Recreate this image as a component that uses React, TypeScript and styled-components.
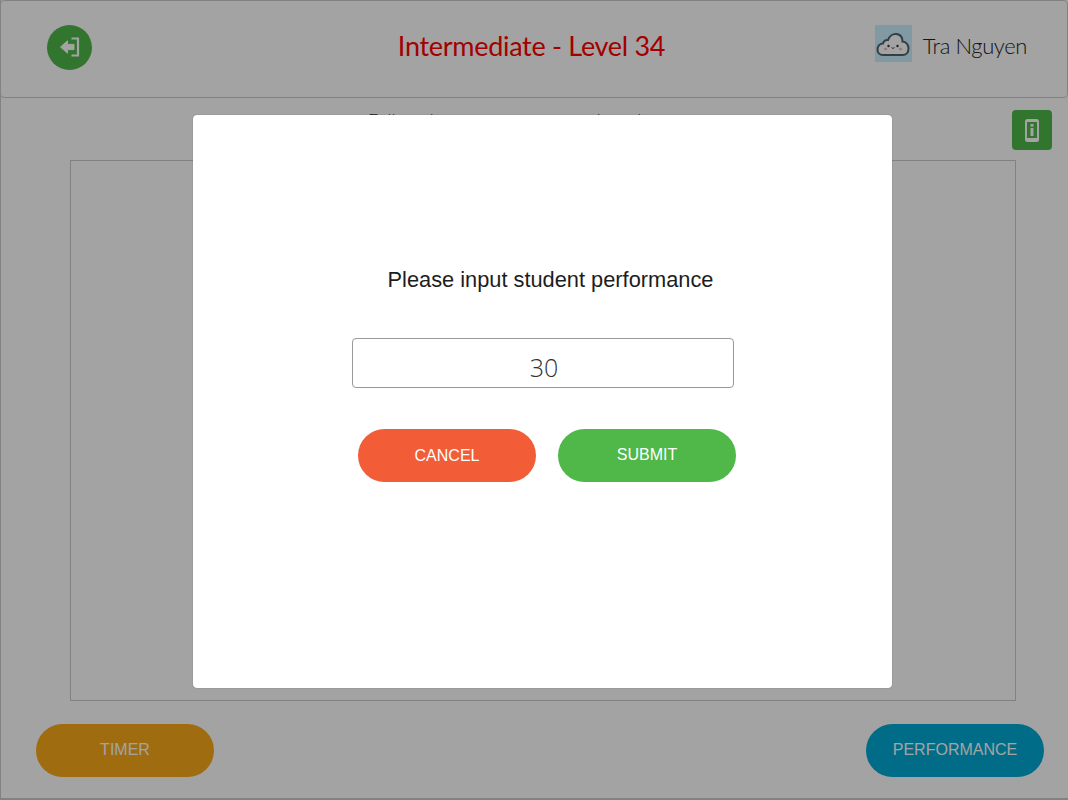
import styled, { createGlobalStyle } from 'styled-components';

const GlobalStyle = createGlobalStyle`
  html, body {
    margin: 0;
    padding: 0;
    background: #fff;
  }
`;

const Page = styled.div`
  position: relative;
  width: 1068px;
  height: 800px;
  overflow: hidden;
`;

const Screen = styled.div`
  box-sizing: border-box;
  height: 800px;
  display: flex;
  flex-direction: column;
  border-left: 1px solid #ccc;
  border-bottom: 2px solid #ccc;
`;

const Header = styled.header`
  box-sizing: border-box;
  height: 98px;
  margin-left: -1px;
  display: grid;
  grid-template-columns: 1fr auto 1fr;
  align-items: center;
  padding: 0 40px 4px 46px;
  border: 1px solid #ccc;
  border-radius: 4px;
  background: #fff;
`;

const BackButton = styled.button`
  width: 45px;
  height: 45px;
  padding: 0;
  display: flex;
  align-items: center;
  justify-content: center;
  border: none;
  border-radius: 50%;
  background: #4fb848;
`;

const Title = styled.h1`
  margin: -4px 11px 0 0;
  font-family: 'Lato', 'Noto Sans', sans-serif;
  font-size: 27px;
  font-weight: 400;
  letter-spacing: -0.3px;
  color: #ff0000;
`;

const User = styled.div`
  justify-self: end;
  display: flex;
  align-items: center;
  gap: 11px;
  margin-top: -7px;
`;

const Avatar = styled.div`
  width: 37px;
  height: 37px;
  background: #c8f0ff;
`;

const UserName = styled.span`
  padding-top: 3px;
  font-family: 'Lato', 'Noto Sans', sans-serif;
  font-size: 22px;
  font-weight: 300;
  letter-spacing: -0.4px;
  color: #222;
`;

const InstructionRow = styled.div`
  box-sizing: border-box;
  height: 62px;
  display: flex;
  align-items: flex-start;
  justify-content: flex-end;
  padding: 12px 16px 0 0;
  position: relative;
`;

const Instruction = styled.p`
  position: absolute;
  top: 11px;
  left: 367px;
  margin: 0;
  font-family: 'Lato', sans-serif;
  font-size: 18px;
  font-weight: 300;
  color: #333;
  white-space: nowrap;
`;

const InfoButton = styled.button`
  width: 40px;
  height: 40px;
  padding: 0;
  display: flex;
  align-items: center;
  justify-content: center;
  border: none;
  border-radius: 4px;
  background: #4fb848;
`;

const Canvas = styled.div`
  box-sizing: border-box;
  width: 946px;
  height: 541px;
  margin-left: 69px;
  border: 1px solid #ccc;
`;

const Footer = styled.footer`
  display: flex;
  justify-content: space-between;
  padding: 23px 24px 0 35px;
`;

const PillButton = styled.button<{ $color: string; $raised?: boolean }>`
  width: 178px;
  height: 53px;
  padding: 0 0 ${(props) => (props.$raised ? '2px' : '0')};
  border: none;
  border-radius: 27px;
  background: ${(props) => props.$color};
  color: #fff;
  font-family: 'Liberation Sans', Arial, sans-serif;
  font-size: 16px;
  text-transform: uppercase;
`;

const Backdrop = styled.div`
  position: absolute;
  inset: 0;
  background: rgba(0, 0, 0, 0.36);
`;

const Modal = styled.div`
  position: absolute;
  top: 115px;
  left: 193px;
  box-sizing: border-box;
  width: 699px;
  height: 573px;
  display: flex;
  flex-direction: column;
  align-items: center;
  padding-top: 151px;
  border-radius: 4px;
  background: #fff;
  box-shadow: 0 0 1px rgba(0, 0, 0, 0.5);
`;

const Prompt = styled.div`
  font-family: 'Liberation Sans', Arial, sans-serif;
  font-size: 21.8px;
  line-height: 28px;
  color: #1d1d1d;
  margin-left: 16px;
`;

const ScoreInput = styled.input`
  box-sizing: border-box;
  width: 382px;
  height: 50px;
  margin-top: 44px;
  margin-left: 1px;
  padding: 8px 0 0 2px;
  border: 1px solid #999;
  border-radius: 4px;
  outline: none;
  background: #fff;
  text-align: center;
  font-family: 'Open Sans', sans-serif;
  font-size: 25px;
  font-weight: 300;
  color: #333;
`;

const ModalActions = styled.div`
  display: flex;
  gap: 22px;
  margin-top: 41px;
  margin-left: 9px;
`;

const BackIcon = () => (
  <svg width="22" height="22" viewBox="0 0 22 22" aria-hidden="true">
    <path d="M1.5 11 L8.5 4.8 V8.4 H15 V13.6 H8.5 V17.2 Z" fill="#fff" stroke="#fff" strokeLinejoin="round" />
    <path d="M12.5 2.5 H19 V19.5 H12.5" fill="none" stroke="#fff" strokeWidth="2.2" />
  </svg>
);

const PhoneInfoIcon = () => (
  <svg width="14" height="23" viewBox="0 0 14 23" aria-hidden="true">
    <rect width="14" height="23" rx="2.5" fill="#fff" />
    <rect x="2" y="3" width="10" height="16" fill="#4fb848" />
    <rect x="5.5" y="5" width="3" height="2.6" fill="#fff" />
    <rect x="5.5" y="9" width="3" height="8" fill="#fff" />
  </svg>
);

const CloudIcon = () => (
  <svg width="37" height="37" viewBox="0 0 37 37" aria-hidden="true">
    <path
      d="M8 30 C4.5 30 2.5 27.5 2.5 24.5 C2.5 21 5 18.5 8 18.5 C8.5 16 11 14.5 13 15 C14.5 11 18 8.5 21.5 9 C25.5 9.5 27.5 12.5 27.5 16.5 C31 16.5 33.5 20 33.5 23.5 C33.5 27.5 31 30 27.5 30 Z"
      fill="#fff"
      stroke="#52636c"
      strokeWidth="2"
    />
    <circle cx="13.5" cy="21" r="1.2" fill="#333" />
    <circle cx="22.5" cy="21" r="1.2" fill="#333" />
    <path d="M16.5 22.5 Q18 24.5 19.5 22.5" fill="none" stroke="#333" strokeWidth="0.9" />
    <ellipse cx="10.5" cy="24" rx="1.8" ry="1.2" fill="#f7bcbc" />
    <ellipse cx="25.5" cy="24" rx="1.8" ry="1.2" fill="#f7bcbc" />
  </svg>
);

const App = () => {
  return (
    <>
      <GlobalStyle />
      <Page>
        <Screen>
          <Header>
            <BackButton aria-label="Back">
              <BackIcon />
            </BackButton>
            <Title>Intermediate - Level 34</Title>
            <User>
              <Avatar>
                <CloudIcon />
              </Avatar>
              <UserName>Tra Nguyen</UserName>
            </User>
          </Header>
          <InstructionRow>
            <Instruction>Follow the sequence on your board</Instruction>
            <InfoButton aria-label="Info">
              <PhoneInfoIcon />
            </InfoButton>
          </InstructionRow>
          <Canvas />
          <Footer>
            <PillButton $color="#f9a91a" $raised>Timer</PillButton>
            <PillButton $color="#00aad4" $raised>Performance</PillButton>
          </Footer>
        </Screen>
        <Backdrop />
        <Modal>
          <Prompt>Please input student performance</Prompt>
          <ScoreInput defaultValue="30" />
          <ModalActions>
            <PillButton $color="#f25c36">Cancel</PillButton>
            <PillButton $color="#4fb848" $raised>Submit</PillButton>
          </ModalActions>
        </Modal>
      </Page>
    </>
  );
};

export default App;
